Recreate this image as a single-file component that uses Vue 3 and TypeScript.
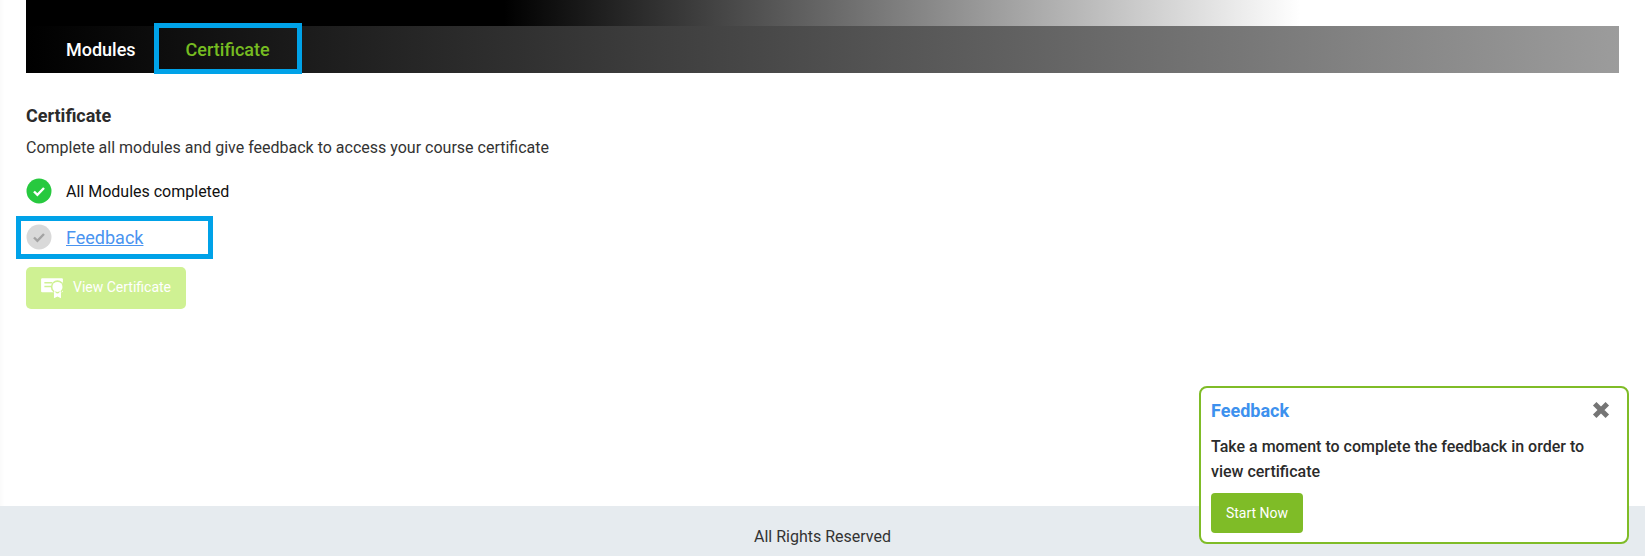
<script setup lang="ts">
import { ref } from "vue";

const tabs = ["Modules", "Certificate"];
const activeTab = ref("Certificate");
const showPopup = ref(true);
</script>

<template>
  <div class="page">
    <main class="content">
      <div class="hero"></div>
      <nav class="tabs">
        <button
          v-for="tab in tabs"
          :key="tab"
          :class="['tab', { 'tab--active': activeTab === tab }]"
          @click="activeTab = tab"
        >
          {{ tab }}
        </button>
      </nav>

      <section class="certificate">
        <h2 class="heading">Certificate</h2>
        <p class="intro">Complete all modules and give feedback to access your course certificate</p>

        <div class="step">
          <svg class="step-icon" viewBox="0 0 26 26">
            <circle cx="13" cy="13" r="12.5" fill="#27c93f" />
            <path d="M8 13.5l3.4 3.4L18 10" fill="none" stroke="#fff" stroke-width="2.4" />
          </svg>
          <span>All Modules completed</span>
        </div>

        <div class="step step--marked">
          <svg class="step-icon" viewBox="0 0 26 26">
            <circle cx="13" cy="13" r="12.5" fill="#d9d9d9" />
            <path d="M8 13.5l3.4 3.4L18 10" fill="none" stroke="#a3a3a3" stroke-width="2.4" />
          </svg>
          <a class="step-link" href="#">Feedback</a>
        </div>

        <button class="view-btn" disabled>
          <svg class="view-icon" viewBox="0 0 22 20">
            <rect x="1" y="1" width="20" height="13" rx="1" fill="#fff" />
            <path d="M4 5.2h7M4 8.6h7" stroke="#cff193" stroke-width="1.4" />
            <circle cx="16" cy="9" r="6" fill="#cff193" />
            <path d="M12.8 13v6.4l3.2-1.6 3.2 1.6V13z" fill="#fff" />
            <circle cx="16" cy="13" r="2" fill="#cff193" />
            <circle cx="16" cy="9" r="4.6" fill="#fff" />
          </svg>
          <span class="view-label">View Certificate</span>
        </button>
      </section>
    </main>

    <footer class="footer">All Rights Reserved</footer>

    <aside v-if="showPopup" class="popup">
      <div class="popup-head">
        <span class="popup-title">Feedback</span>
        <svg class="popup-close" viewBox="0 0 16 16" @click="showPopup = false">
          <path d="M2.4 2.4l11.2 11.2M13.6 2.4L2.4 13.6" stroke="#757575" stroke-width="4.4" />
        </svg>
      </div>
      <p class="popup-text">Take a moment to complete the feedback in order to view certificate</p>
      <button class="start-btn">Start Now</button>
    </aside>
  </div>
</template>

<style>
body {
  margin: 0;
  background: #fff;
}
</style>

<style scoped>
.page {
  position: relative;
  display: flex;
  flex-direction: column;
  height: 556px;
  overflow: hidden;
  font-family: Roboto, "Liberation Sans", sans-serif;
  color: #222;
}

.content {
  flex: 1;
  padding: 0 26px;
  box-shadow: inset 4px 0 4px -3px rgba(0, 0, 0, 0.03);
}

.hero {
  height: 26px;
  background: linear-gradient(90deg, #000 30%, #fff 80%);
}

.tabs {
  display: flex;
  height: 47px;
  padding-left: 16px;
  background: linear-gradient(90deg, #000 0%, #9c9c9c 100%);
}

.tab {
  position: relative;
  padding: 0 18px 0 24px;
  border: none;
  background: none;
  font: 500 18px Roboto, sans-serif;
  color: #fff;
  cursor: pointer;
}

.tab--active {
  padding: 0 32px;
  color: #76bc21;
}

.tab--active::after {
  content: "";
  position: absolute;
  inset: -3px 0 -1px 0;
  border: 5px solid #00a2e8;
  pointer-events: none;
}

.certificate {
  padding-top: 32px;
}

.heading {
  margin: 0;
  font-size: 18px;
  line-height: 21px;
  font-weight: 700;
  color: #2b2b2b;
}

.intro {
  margin: 11px 0 0;
  font-size: 16px;
  line-height: 21px;
  color: #333;
}

.step {
  display: flex;
  align-items: center;
  gap: 14px;
  height: 26px;
  margin-top: 20px;
  font-size: 16px;
  color: #111;
}

.step--marked {
  position: relative;
  margin-top: 20px;
}

.step--marked::after {
  content: "";
  position: absolute;
  left: -10px;
  top: -8px;
  width: 197px;
  height: 43px;
  box-sizing: border-box;
  border: 5px solid #00a2e8;
  pointer-events: none;
}

.step-icon {
  width: 26px;
  height: 26px;
  flex: none;
}

.step-link {
  font-size: 18px;
  color: #4a94f0;
  text-decoration: underline;
}

.view-btn {
  display: flex;
  align-items: center;
  gap: 9px;
  width: 160px;
  height: 42px;
  margin-top: 17px;
  padding: 0 14px;
  border: none;
  border-radius: 5px;
  background: #cff193;
  font: 400 14px Roboto, sans-serif;
  color: #fff;
}

.view-label {
  padding-bottom: 2px;
}

.view-icon {
  width: 24px;
  height: 22px;
  flex: none;
}

.footer {
  height: 50px;
  background: #e6ebef;
  font-size: 16px;
  line-height: 62px;
  text-align: center;
  color: #333;
}

.popup {
  position: absolute;
  left: 1199px;
  top: 386px;
  width: 430px;
  height: 158px;
  box-sizing: border-box;
  padding: 11px 10px;
  border: 2px solid #7fbc27;
  border-radius: 8px;
  background: #fff;
}

.popup-head {
  display: flex;
  align-items: center;
  justify-content: space-between;
  height: 22px;
  padding-right: 7px;
}

.popup-title {
  font-size: 18px;
  font-weight: 700;
  color: #3d91ee;
}

.popup-close {
  width: 18px;
  height: 18px;
  cursor: pointer;
}

.popup-text {
  margin: 13px 0 0;
  font-size: 16px;
  font-weight: 500;
  line-height: 25px;
  color: #2b2b2b;
}

.start-btn {
  display: block;
  width: 92px;
  height: 40px;
  margin-top: 9px;
  padding: 0;
  border: none;
  border-radius: 4px;
  background: #7fbc27;
  font: 400 14px Roboto, sans-serif;
  color: #fff;
}
</style>
